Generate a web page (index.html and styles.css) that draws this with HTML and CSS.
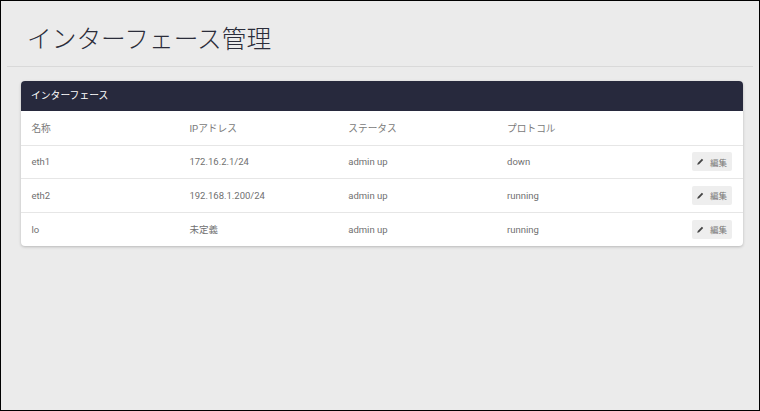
FILE: index.html
```html
<!DOCTYPE html>
<html lang="ja">
<head>
<meta charset="utf-8">
<title>インターフェース管理</title>
<link rel="stylesheet" href="styles.css">
</head>
<body>
<div class="page">
  <header class="page-head"><h1>インターフェース管理</h1></header>
  <section class="card">
    <div class="card-head">インターフェース</div>
    <div class="row row-head">
      <span>名称</span><span>IPアドレス</span><span>ステータス</span><span>プロトコル</span><span></span>
    </div>
    <div class="row">
      <span>eth1</span><span>172.16.2.1/24</span><span>admin up</span><span>down</span>
      <span class="act"><button class="btn"><svg class="ico" viewBox="0 0 8 8"><path d="M0.2 7.8 L0.9 5.6 L5.6 0.9 L7.1 2.4 L2.4 7.1 Z"/></svg>編集</button></span>
    </div>
    <div class="row">
      <span>eth2</span><span>192.168.1.200/24</span><span>admin up</span><span>running</span>
      <span class="act"><button class="btn"><svg class="ico" viewBox="0 0 8 8"><path d="M0.2 7.8 L0.9 5.6 L5.6 0.9 L7.1 2.4 L2.4 7.1 Z"/></svg>編集</button></span>
    </div>
    <div class="row">
      <span>lo</span><span>未定義</span><span>admin up</span><span>running</span>
      <span class="act"><button class="btn"><svg class="ico" viewBox="0 0 8 8"><path d="M0.2 7.8 L0.9 5.6 L5.6 0.9 L7.1 2.4 L2.4 7.1 Z"/></svg>編集</button></span>
    </div>
  </section>
</div>
</body>
</html>
```
FILE: styles.css
```css
html, body { margin: 0; height: 100%; }
body {
  font-family: Roboto, "Noto Sans CJK JP", sans-serif;
  background: #ebebeb;
}
.page {
  box-sizing: border-box;
  height: 411px;
  border: 1px solid #000;
  padding: 0 6px;
  overflow: hidden;
}
.page-head {
  height: 65px;
  border-bottom: 1px solid #d9d9d9;
  padding-left: 20px;
}
h1 {
  margin: 0;
  padding-top: 22px;
  font-size: 24.7px;
  line-height: 33px;
  font-weight: 300;
  color: #2b2d3a;
}
.card {
  margin: 14px 10px 0 14px;
  background: #fff;
  border-radius: 4px;
  box-shadow: 0 1px 3px rgba(0,0,0,.22);
  overflow: hidden;
}
.card-head {
  height: 30px;
  line-height: 29px;
  padding-left: 10px;
  background: #27293d;
  color: #fff;
  font-size: 9.8px;
}
.row {
  box-sizing: border-box;
  display: grid;
  grid-template-columns: 22% 22% 22% 22% 12%;
  align-items: center;
  height: 33.7px;
  border-top: 1px solid #e6e6e6;
  font-size: 9.5px;
  color: #707070;
}
.row-head { height: 33.7px; border-top: 0; color: #7a7a7a; font-size: 9.7px; }
.row > span { padding: 0 0 0.6px 10px; margin-left: -0.4px; }
.row > span:first-child { margin-left: 0.4px; }
.row > .act { padding: 0 11px 0.6px 0; margin-left: 0; display: flex; justify-content: flex-end; }
.btn {
  display: flex;
  align-items: center;
  gap: 6px;
  height: 19px;
  width: 40px;
  padding: 0 0 0 5px;
  border: 0;
  border-radius: 2px;
  background: #eee;
  color: #777;
  font: 8.5px Roboto, "Noto Sans CJK JP", sans-serif;
}
.ico { width: 7px; height: 7px; fill: #444; flex: none; }
```
